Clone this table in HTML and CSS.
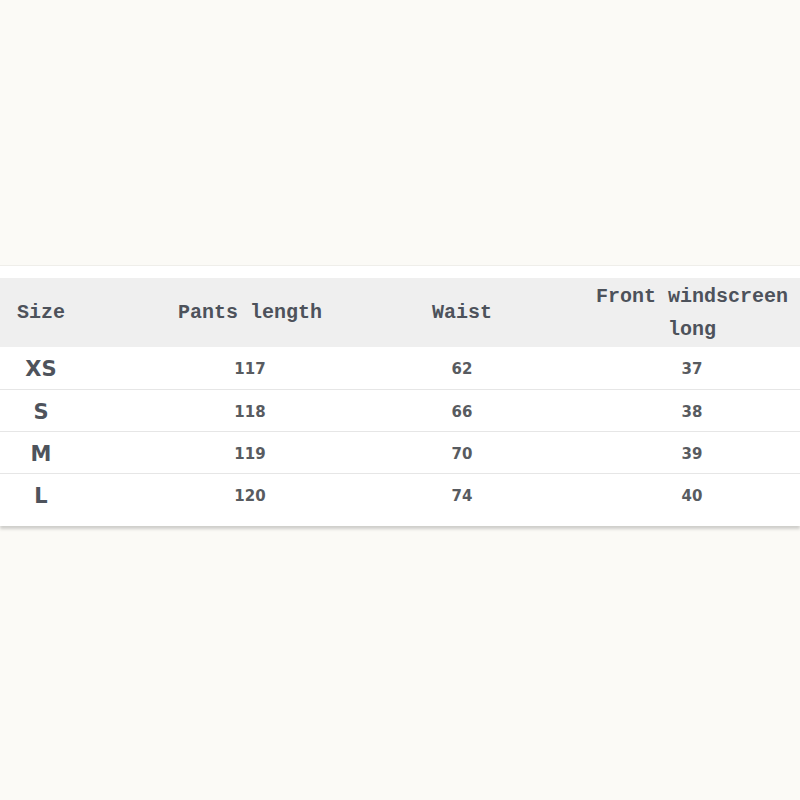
FILE: index.html
```html
<!DOCTYPE html>
<html>
<head>
<meta charset="utf-8">
<link rel="stylesheet" href="styles.css">
</head>
<body>
<div class="band">
  <table class="size-table">
    <colgroup>
      <col class="c1"><col class="c2"><col class="c3"><col class="c4">
    </colgroup>
    <thead>
      <tr>
        <th class="first">Size</th>
        <th>Pants length</th>
        <th>Waist</th>
        <th>Front windscreen<br>long</th>
      </tr>
    </thead>
    <tbody>
      <tr><td class="sz">XS</td><td>117</td><td>62</td><td>37</td></tr>
      <tr><td class="sz">S</td><td>118</td><td>66</td><td>38</td></tr>
      <tr><td class="sz">M</td><td>119</td><td>70</td><td>39</td></tr>
      <tr class="last"><td class="sz">L</td><td>120</td><td>74</td><td>40</td></tr>
    </tbody>
  </table>
</div>
</body>
</html>
```

FILE: styles.css
```css
html, body {
  margin: 0;
  padding: 0;
  background: #fbfaf6;
  overflow: hidden;
  height: 800px;
}
.band {
  margin-top: 265px;
  border-top: 1px solid #efeeea;
  background: #ffffff;
  padding-top: 12px;
  padding-bottom: 0;
  box-shadow: 0 3px 3px rgba(0,0,0,0.18);
  width: 800px;
  overflow: hidden;
}
.size-table {
  border-collapse: collapse;
  table-layout: fixed;
  width: 878px;
}
.c1 { width: 82px; }
.c2 { width: 336px; }
.c3 { width: 88px; }
.c4 { width: 372px; }
.size-table th {
  background: #efefef;
  height: 69px;
  padding: 0;
  font-family: "Liberation Mono", "DejaVu Sans Mono", monospace;
  font-weight: bold;
  font-size: 20px;
  line-height: 33px;
  color: #4d525b;
  text-align: center;
  vertical-align: middle;
  white-space: nowrap;
}
.size-table td {
  height: 39px;
  padding: 2px 0 0 0;
  border-bottom: 1px solid #e6e6e6;
  font-family: "DejaVu Sans", Verdana, sans-serif;
  font-weight: bold;
  font-size: 15px;
  color: #585b60;
  text-align: center;
  vertical-align: middle;
}
.size-table tbody tr:first-child td {
  height: 40px;
}
.size-table td.sz {
  font-size: 21px;
  color: #4e535c;
}
.size-table tr.last td {
  border-bottom: none;
  height: 41px;
  padding: 1px 0 10px 0;
}
```
